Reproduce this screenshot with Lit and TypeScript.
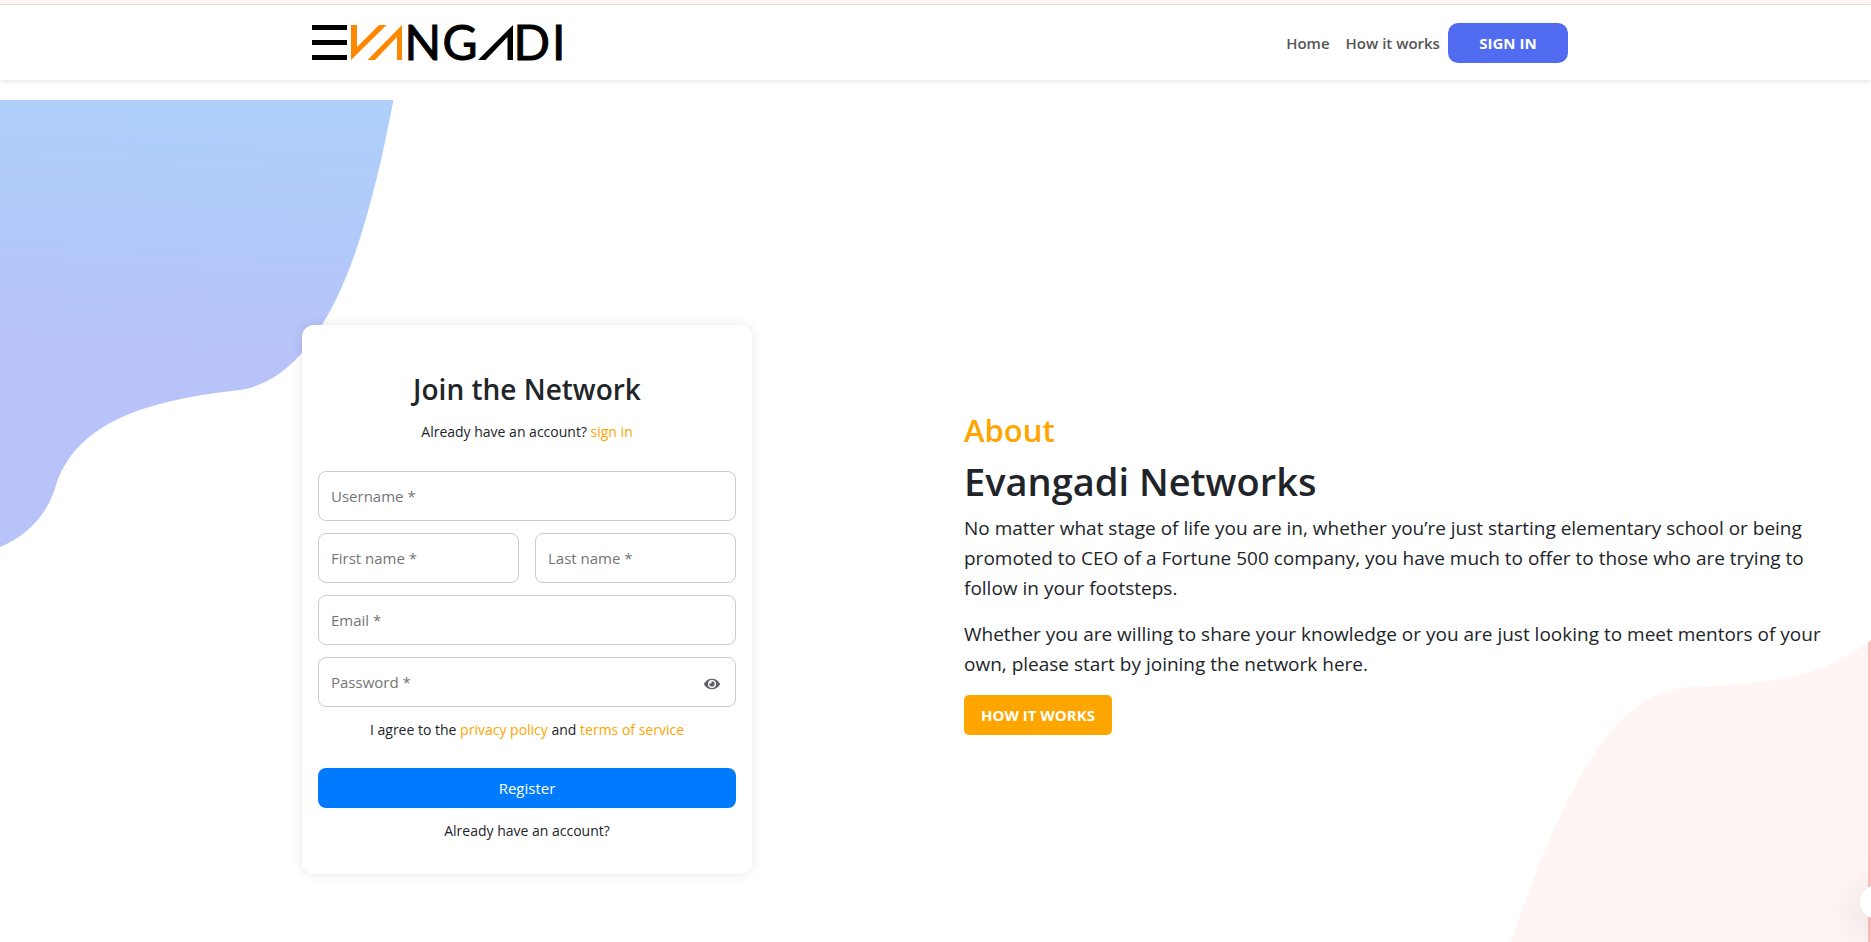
import { LitElement, html, css } from "lit";
import { customElement, state } from "lit/decorators.js";

@customElement("brand-logo")
class BrandLogo extends LitElement {
  static styles = css`
    :host { display: block; }
    .logo { display: block; width: 250px; height: 35px; overflow: visible; }
    .ink { fill: #000; }
    .accent { fill: #ff8800; }
    .word { font: 400 48px Lato, sans-serif; fill: #000; stroke: #000; stroke-width: 1; }
  `;
  render() {
    return html`
      <svg class="logo" viewBox="0 0 250 35" role="img" aria-label="Evangadi">
        <rect class="ink" x="0" y="0" width="35" height="5" />
        <rect class="ink" x="0" y="15" width="35" height="5" />
        <rect class="ink" x="0" y="30" width="35" height="5" />
        <path class="accent" d="M39 0H45V22L67 0H74.500L39 35Z" />
        <path class="accent" d="M55.500 35L90 0V35H85V12L63 35Z" />
        <path class="ink" d="M166 35L201 0V35H195.500V12L173.500 35Z" />
        <text class="word" x="92.500 130.500 201.500 240" y="34.500">NGDI</text>
      </svg>
    `;
  }
}

@customElement("site-header")
class SiteHeader extends LitElement {
  static styles = css`
    :host { display: block; position: relative; }
    .strip { height: 4px; background: #fff5f4; border-bottom: 1px solid #f6d9dc; }
    .bar {
      display: flex; align-items: center; justify-content: space-between;
      height: 75px; padding: 0 16.2% 0 16.7%;
      background: #fff; box-shadow: 0 2px 5px rgba(0, 0, 0, 0.09);
    }
    .nav { display: flex; align-items: center; gap: 16px; }
    .link { color: #555; font-size: 15px; font-weight: 600; line-height: 24px; text-decoration: none; }
    .signin {
      margin-left: -8px; width: 120px; height: 40px; border: 0; border-radius: 10px;
      background: #516cf0; color: #fff; font: inherit; font-size: 15px; font-weight: 700; cursor: pointer;
    }
  `;
  render() {
    return html`
      <div class="strip"></div>
      <header class="bar">
        <brand-logo></brand-logo>
        <nav class="nav">
          <a class="link" href="#home">Home</a>
          <a class="link" href="#how">How it works</a>
          <button class="signin" type="button">SIGN IN</button>
        </nav>
      </header>
    `;
  }
}

@customElement("join-card")
class JoinCard extends LitElement {
  @state() private shown = false;

  static styles = css`
    :host {
      display: block; box-sizing: border-box; width: 450px; max-width: 100%;
      padding: 48px 16px 32px; border-radius: 12px; background: #fff;
      box-shadow: 0 0 12px rgba(0, 0, 0, 0.1); text-align: center;
    }
    .title { margin: 0 0 14px; font-size: 28px; line-height: 32px; padding-bottom: 2px; font-weight: 600; }
    .note { margin: 0; font-size: 14px; line-height: 22px; }
    .note a { color: #ffa500; text-decoration: none; }
    .form { display: grid; grid-template-columns: 1fr 1fr; gap: 12px 16px; margin-top: 28px; }
    .wide { grid-column: 1 / -1; }
    .field { display: grid; align-items: center; }
    .field > * { grid-area: 1 / 1; }
    .input {
      box-sizing: border-box; width: 100%; height: 50px; padding: 0 12px;
      border: 1px solid #ccc; border-radius: 8px; background: #fff; color: #212529;
      font: inherit; font-size: 15px; outline: none;
    }
    .label {
      justify-self: start; z-index: 1; padding-left: 13px; color: #757575;
      font-size: 15px; line-height: 24px; pointer-events: none;
    }
    .input:not(:placeholder-shown) + .label { visibility: hidden; }
    .eye {
      justify-self: end; z-index: 1; margin: 4px 16px 0 0; padding: 0; border: 0; background: none;
      color: #5f6366; cursor: pointer;
    }
    .eye svg { display: block; width: 16px; height: 16px; }
    .submit {
      height: 40px; margin-top: 15px; border: 0; border-radius: 8px; background: #007bff;
      color: #fff; font: inherit; font-size: 15px; cursor: pointer;
    }
  `;

  private field(id: string, text: string, wide = false) {
    return html`
      <div class="field ${wide ? "wide" : ""}">
        <input class="input" id=${id} name=${id} type="text" placeholder=" " required />
        <label class="label" for=${id}>${text} *</label>
      </div>
    `;
  }

  render() {
    return html`
      <h2 class="title">Join the Network</h2>
      <p class="note">Already have an account? <a href="#signin">sign in</a></p>
      <form class="form" @submit=${(e: Event) => e.preventDefault()}>
        ${this.field("username", "Username", true)}
        ${this.field("first-name", "First name")}
        ${this.field("last-name", "Last name")}
        ${this.field("email", "Email", true)}
        <div class="field wide">
          <input class="input" id="password" type=${this.shown ? "text" : "password"} placeholder=" " required />
          <label class="label" for="password">Password *</label>
          <button class="eye" type="button" aria-label="Show password" @click=${() => (this.shown = !this.shown)}>
            <svg viewBox="0 0 576 512" fill="currentColor" aria-hidden="true">
              <path d="M572.52 241.4C518.29 135.59 410.93 64 288 64S57.68 135.64 3.48 241.41a32.35 32.35 0 0 0 0 29.19C57.71 376.41 165.07 448 288 448s230.32-71.64 284.52-177.41a32.35 32.35 0 0 0 0-29.19zM288 400a144 144 0 1 1 144-144 143.93 143.93 0 0 1-144 144zm0-240a95.31 95.31 0 0 0-25.31 3.79 47.85 47.85 0 0 1-66.9 66.9A95.78 95.78 0 1 0 288 160z" />
            </svg>
          </button>
        </div>
        <p class="note wide">
          I agree to the <a href="#privacy">privacy policy</a> and <a href="#terms">terms of service</a>
        </p>
        <button class="submit wide" type="submit">Register</button>
        <p class="note wide">Already have an account?</p>
      </form>
    `;
  }
}

@customElement("about-panel")
class AboutPanel extends LitElement {
  static styles = css`
    :host { display: block; padding-bottom: 54px; }
    .kicker { margin: 0 0 8px; color: #ffa500; font-size: 31px; line-height: 38px; font-weight: 600; }
    .title { margin: 0 0 8px; font-size: 38px; line-height: 48px; font-weight: 600; }
    .text { margin: 0 0 16px; font-size: 19px; line-height: 30px; }
    .more {
      height: 40px; padding: 0 17px; border: 0; border-radius: 5px; background: #ffa500;
      color: #fff; font: inherit; font-size: 15px; font-weight: 700; cursor: pointer;
    }
  `;
  render() {
    return html`
      <h3 class="kicker">About</h3>
      <h1 class="title">Evangadi Networks</h1>
      <p class="text">
        No matter what stage of life you are in, whether you’re just starting elementary school or being
        promoted to CEO of a Fortune 500 company, you have much to offer to those who are trying to follow
        in your footsteps.
      </p>
      <p class="text">
        Whether you are willing to share your knowledge or you are just looking to meet mentors of your
        own, please start by joining the network here.
      </p>
      <button class="more" type="button">HOW IT WORKS</button>
    `;
  }
}

@customElement("app-root")
class AppRoot extends LitElement {
  static styles = css`
    :host {
      display: flex; flex-direction: column; position: relative; box-sizing: border-box;
      min-height: 100vh; overflow: hidden; background: #fff; color: #212529;
      font-family: "Open Sans", "Noto Sans", sans-serif; font-size: 16px;
    }
    .hero {
      position: relative; flex: 1; display: grid; grid-template-columns: 1fr 1fr;
      align-items: center; margin-top: 20px; padding: 225px 33px 68px 90px;
    }
    .wave { position: absolute; pointer-events: none; }
    .wave-left { left: 0; top: 0; width: 394px; height: 448px; }
    .wave-right { right: 0; bottom: 0; width: 360px; height: 302px; }
    .card { position: relative; justify-self: center; }
    .about { position: relative; }
    .chat {
      position: absolute; right: -23px; bottom: 23px; width: 34px; height: 34px; padding: 0;
      border: 0; border-radius: 50%; background: #fff; cursor: pointer;
      box-shadow: 0 8px 40px 4px rgba(0, 0, 0, 0.12);
    }
  `;
  render() {
    return html`
      <site-header></site-header>
      <main class="hero">
        <svg class="wave wave-left" viewBox="0 0 394 448" aria-hidden="true">
          <defs>
            <linearGradient id="sky" x1="0.05" y1="0" x2="0" y2="1">
              <stop offset="0" stop-color="#aecffa" />
              <stop offset="0.25" stop-color="#b2cafb" />
              <stop offset="0.55" stop-color="#b8c3f9" />
              <stop offset="1" stop-color="#b8c3f9" />
            </linearGradient>
          </defs>
          <path fill="url(#sky)" d="M0 0H393.500C378 80 358 167 322 225C300 262 272 285 240 290C150 300 80 320 57 382C48 415 28 435 0 447Z" />
        </svg>
        <svg class="wave wave-right" viewBox="0 0 360 302" aria-hidden="true">
          <path fill="#fff5f5" d="M0 302C50 155 100 50 179 47C260 44 310 38 360 0V302Z" />
          <path fill="#ffbfbf" d="M357 3L360 0V302H357Z" />
        </svg>
        <join-card class="card"></join-card>
        <about-panel class="about"></about-panel>
        <button class="chat" type="button" aria-label="Open chat"></button>
      </main>
    `;
  }
}
